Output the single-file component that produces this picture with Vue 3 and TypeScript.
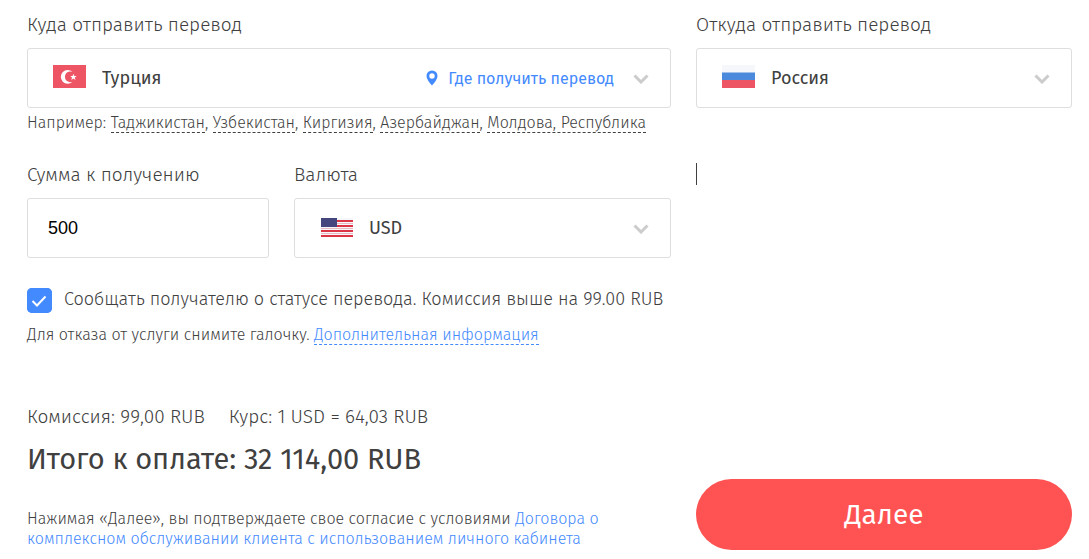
<script setup lang="ts">
import { ref } from 'vue'

const target = ref('Турция')
const source = ref('Россия')
const currency = ref('USD')
const amount = ref('500')
const notify = ref(true)
const examples: string[] = ['Таджикистан', 'Узбекистан', 'Киргизия', 'Азербайджан', 'Молдова, Республика']
const stripes: number[] = [5, 10, 15, 20]
</script>

<template>
  <form class="transfer" @submit.prevent>
    <div class="main">
      <label class="caption" for="target">Куда отправить перевод</label>
      <div class="field">
        <svg class="flag" viewBox="0 0 33 23" aria-hidden="true">
          <path fill="#ed5565" d="M0 0h33v23H0z" />
          <path fill="#fff" d="M19.5 6.9A6.9 6.9 0 1 0 19.5 16.8A5.4 5.4 0 1 1 19.5 6.9Z" />
          <path fill="#fff" d="m20.4 8.8.9 2.2 2.4.1-1.9 1.5.7 2.4-2.1-1.4-2 1.4.6-2.4-1.8-1.5 2.4-.1z" />
        </svg>
        <select id="target" v-model="target" class="choice">
          <option>Турция</option>
        </select>
        <a class="places" href="#places">
          <svg class="pin" viewBox="0 0 12 16" aria-hidden="true">
            <path fill="#448aff" fill-rule="evenodd" d="M6 .5A5.4 5.4 0 0 0 .5 6C.5 9.8 6 15.5 6 15.5S11.5 9.8 11.5 6A5.4 5.4 0 0 0 6 .5ZM6 3.3a2.7 2.7 0 1 1 0 5.4a2.7 2.7 0 0 1 0-5.4Z" />
          </svg>
          Где получить перевод
        </a>
        <svg class="chevron" viewBox="0 0 16 10" aria-hidden="true">
          <path d="m1.500 1.500 6.500 6.500L14.500 1.500" />
        </svg>
      </div>
      <p class="hint">
        Например:
        <template v-for="(name, i) in examples" :key="name"><a class="dashed" href="#country" @click.prevent="target = 'Турция'">{{ name }}</a>{{ i < examples.length - 1 ? ', ' : '' }}</template>
      </p>

      <div class="pair">
        <div>
          <label class="caption" for="amount">Сумма к получению</label>
          <input id="amount" v-model="amount" class="field amount" type="text" inputmode="decimal">
        </div>
        <div>
          <label class="caption" for="currency">Валюта</label>
          <div class="field">
            <svg class="flag" viewBox="0 0 33 23" aria-hidden="true">
              <path fill="#f5f7fa" d="M1 3h32v19H1z" />
              <path v-for="y in stripes" :key="y" fill="#dc3545" :d="`M1 ${y}h32v2H1z`" />
              <path fill="#e9b9c0" d="M1 8h32v1H1zM1 13h32v1H1zM1 18h32v1H1z" />
              <path fill="#46467f" d="M1 3h16v9H1z" />
            </svg>
            <select id="currency" v-model="currency" class="choice">
              <option>USD</option>
            </select>
            <svg class="chevron" viewBox="0 0 16 10" aria-hidden="true">
              <path d="m1.500 1.500 6.500 6.500L14.500 1.500" />
            </svg>
          </div>
        </div>
      </div>

      <label class="notify">
        <input v-model="notify" class="tick" type="checkbox">
        <span>Сообщать получателю о статусе перевода. Комиссия выше на 99.00 RUB</span>
        <svg v-if="notify" class="check" viewBox="0 0 25 25" aria-hidden="true">
          <path d="m5.500 13 4.500 4.500 8.500-9" />
        </svg>
      </label>
      <p class="note">
        Для отказа от услуги снимите галочку. <a class="dashed blue" href="#details">Дополнительная информация</a>
      </p>

      <p class="rates">
        <span>Комиссия: 99,00 RUB</span>
        <span>Курс: 1 USD = 64,03 RUB</span>
      </p>
      <p class="total">Итого к оплате: 32 114,00 RUB</p>
      <p class="legal">
        Нажимая «Далее», вы подтверждаете свое согласие с условиями <a class="blue" href="#terms">Договора о<br>комплексном обслуживании клиента с использованием личного кабинета</a>
      </p>
    </div>

    <div class="side">
      <div>
        <label class="caption" for="source">Откуда отправить перевод</label>
        <div class="field">
          <svg class="flag" viewBox="0 0 33 23" aria-hidden="true">
            <path fill="#f5f7fa" d="M0 0h33v8H0z" />
            <path fill="#4a89dc" d="M0 7.500h33V15H0z" />
            <path fill="#ed5565" d="M0 15h33v8H0z" />
          </svg>
          <select id="source" v-model="source" class="choice">
            <option>Россия</option>
          </select>
          <svg class="chevron" viewBox="0 0 16 10" aria-hidden="true">
            <path d="m1.500 1.500 6.500 6.500L14.500 1.500" />
          </svg>
        </div>
        <div class="caret" aria-hidden="true"></div>
      </div>
      <button class="next" type="submit">Далее</button>
    </div>
  </form>
</template>

<style>
body {
  background: #fff;
}
</style>

<style scoped>
.transfer {
  display: grid;
  grid-template-columns: 644fr 376fr;
  column-gap: 25px;
  padding: 10px 17px 9px 27px;
  color: #404040;
  font-family: "Fira Sans", "Noto Sans", sans-serif;
  font-size: 18px;
  font-weight: 300;
}

.main > *,
.pair > *,
.side > * {
  min-width: 0;
}

.main {
  padding-bottom: 1px;
}

p {
  margin: 0;
}

a {
  color: inherit;
  text-decoration: none;
}

.caption {
  display: block;
  margin-bottom: 8px;
  font-size: 19px;
  line-height: 30px;
}

.field {
  display: flex;
  align-items: center;
  box-sizing: border-box;
  width: 100%;
  height: 60px;
  padding: 0 21px 0 25px;
  border: 1px solid #dedede;
  border-radius: 3px;
  background: #fff;
}

.flag {
  flex: none;
  width: 33px;
  height: 23px;
  margin: 0 16px 3px 0;
}

.choice {
  flex: 1;
  min-width: 0;
  height: 100%;
  padding: 0;
  border: 0;
  background: none;
  appearance: none;
  color: #404040;
  font: inherit;
  font-weight: 400;
}

.chevron {
  flex: none;
  width: 16px;
  height: 10px;
  margin-top: 2px;
}

.chevron path {
  fill: none;
  stroke: #ccc;
  stroke-width: 3;
}

.places {
  display: flex;
  align-items: center;
  gap: 10px;
  margin-right: 19px;
  color: #448aff;
  font-size: 16px;
  font-weight: 400;
  white-space: nowrap;
}

.pin {
  width: 12px;
  height: 16px;
}

.hint,
.note {
  font-size: 16px;
  line-height: 22px;
}

.hint {
  margin-top: 4px;
}

.dashed {
  border-bottom: 1px dashed currentColor;
}

.blue {
  color: #448aff;
}

.pair {
  display: grid;
  grid-template-columns: 242fr 377fr;
  column-gap: 25px;
  margin-top: 26px;
}

.amount {
  padding: 0 20px;
  color: #000;
  font-family: "Liberation Sans", Arial, sans-serif;
  font-size: 18px;
}

.notify {
  position: relative;
  display: flex;
  gap: 12px;
  margin-top: 30px;
  line-height: 22px;
}

.tick {
  flex: none;
  width: 25px;
  height: 25px;
  margin: 0;
  border-radius: 5px;
  background: #fff;
  box-shadow: inset 0 0 0 1px #448aff;
  appearance: none;
}

.tick:checked {
  background: #448aff;
}

.check {
  position: absolute;
  top: 0;
  left: 0;
  width: 25px;
  height: 25px;
  pointer-events: none;
}

.check path {
  fill: none;
  stroke: #fff;
  stroke-width: 2;
}

.note {
  margin-top: 11px;
}

.rates {
  display: flex;
  gap: 24px;
  margin-top: 60px;
  font-size: 19px;
  line-height: 22px;
}

.total {
  margin-top: 13px;
  font-size: 29px;
  font-weight: 400;
  line-height: 38px;
}

.legal {
  margin-top: 30px;
  font-size: 16px;
  line-height: 20px;
}

.side {
  display: flex;
  flex-direction: column;
  justify-content: space-between;
}

.caret {
  width: 1px;
  height: 22px;
  margin-top: 55px;
  background: #404040;
}

.next {
  height: 71px;
  border: 0;
  border-radius: 36px;
  background: #ff5252;
  color: #fff;
  font: inherit;
  font-size: 28px;
  font-weight: 400;
}
</style>
